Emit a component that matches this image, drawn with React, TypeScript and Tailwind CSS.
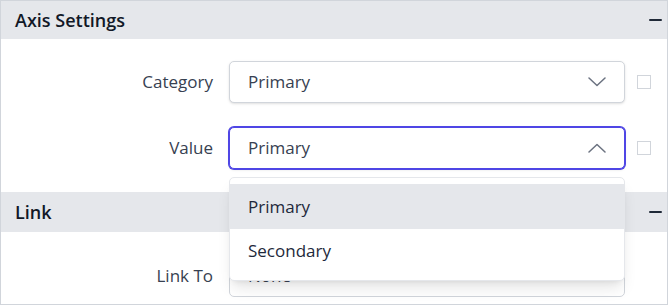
import { useState } from "react";

const font = { fontFamily: '"Open Sans", "Noto Sans", Arial, sans-serif' };

function Chevron({ up = false }: { up?: boolean }) {
  return (
    <svg width="18" height="10" viewBox="0 0 18 10" fill="none" className="shrink-0">
      <path
        d={up ? "M1 9L9 1.5L17 9" : "M1 1L9 8.5L17 1"}
        stroke="#6b7280"
        strokeWidth="1.5"
        strokeLinecap="round"
        strokeLinejoin="round"
      />
    </svg>
  );
}

function Minus() {
  return <span className="block h-[2px] w-[13px] rounded-full bg-[#1f2937]" />;
}

function SectionHeader({ title, tall = false }: { title: string; tall?: boolean }) {
  return (
    <div
      className={`flex items-center justify-between bg-[#e5e7eb] pl-[14px] pr-[5px] ${
        tall ? "h-[40px]" : "h-[38px]"
      }`}
    >
      <span className="text-[18px] font-semibold text-[#111827]">{title}</span>
      <Minus />
    </div>
  );
}

function Checkbox() {
  return <span className="ml-[12px] block h-[14px] w-[14px] border border-[#d1d5db] bg-white" />;
}

function SelectRow({
  label,
  value,
  open = false,
  options,
}: {
  label: string;
  value: string;
  open?: boolean;
  options?: string[];
}) {
  return (
    <div className="flex h-[42px] items-center">
      <span className="w-[228px] pr-[16px] text-right text-[17px] text-[#374151]">{label}</span>
      <div className="relative w-[396px]">
        <div
          className={`flex h-[42px] items-center justify-between rounded-[5px] border bg-white pl-[18px] pr-[18px] shadow-sm ${
            open ? "border-[#4f46e5] ring-1 ring-[#4f46e5]" : "border-[#d1d5db]"
          }`}
        >
          <span className="text-[17px] text-[#374151]">{value}</span>
          <Chevron up={open} />
        </div>
        {open && options && (
          <div className="absolute left-0 right-0 top-[50px] z-10 rounded-[5px] border border-[#e5e7eb] bg-white pb-[7px] pt-[6px] shadow-lg">
            {options.map((o, i) => (
              <div
                key={o}
                className={`flex items-center pl-[18px] text-[17px] text-[#1e293b] ${
                  i === 0 ? "h-[45px] bg-[#e5e7eb]" : "h-[44px]"
                }`}
              >
                {o}
              </div>
            ))}
          </div>
        )}
      </div>
      <Checkbox />
    </div>
  );
}

export default function App() {
  const [open] = useState(true);

  return (
    <div className="h-[305px] w-[668px] overflow-hidden bg-white" style={font}>
      <div className="h-[305px] border border-[#d1d5db]">
        <SectionHeader title="Axis Settings" />
        <div className="relative z-10 flex flex-col gap-[24px] pb-[23px] pt-[22px]">
          <SelectRow label="Category" value="Primary" />
          <SelectRow label="Value" value="Primary" open={open} options={["Primary", "Secondary"]} />
        </div>
        <SectionHeader title="Link" tall />
        <div className="pt-[23px]">
          <div className="flex h-[42px] items-center">
            <span className="w-[228px] pr-[16px] text-right text-[17px] text-[#374151]">Link To</span>
            <div className="flex h-[42px] w-[396px] items-center justify-between rounded-[5px] border border-[#d1d5db] bg-white pl-[18px] pr-[18px]">
              <span className="text-[17px] text-[#374151]">None</span>
              <Chevron />
            </div>
          </div>
        </div>
      </div>
    </div>
  );
}
